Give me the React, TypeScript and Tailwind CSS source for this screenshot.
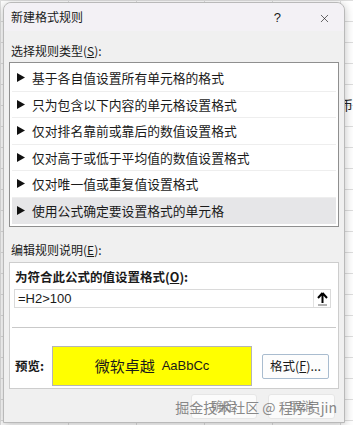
import { X } from 'lucide-react';

const rules = [
    '基于各自值设置所有单元格的格式',
    '只为包含以下内容的单元格设置格式',
    '仅对排名靠前或靠后的数值设置格式',
    '仅对高于或低于平均值的数值设置格式',
    '仅对唯一值或重复值设置格式',
    '使用公式确定要设置格式的单元格',
];

const cjk = "font-['Noto_Sans_CJK_SC','Noto_Sans',sans-serif]";

export default function App() {
    return (
        <div
            className={`relative w-[353px] h-[425px] overflow-hidden bg-white bg-[linear-gradient(#dedede_1px,transparent_1px),linear-gradient(90deg,#dedede_1px,transparent_1px)] bg-[size:68px_21px] text-[#1a1a1a] ${cjk}`}
        >
            {/* spreadsheet fragments peeking out on the right */}
            <div className="absolute right-0 top-[98px] text-[13px] leading-none text-[#222]">]币</div>

            {/* dialog */}
            <div className="absolute left-[3px] top-[2px] w-[342px] h-[421px] flex flex-col rounded-t-[8px] border border-[#b9b9b9] bg-[#f0f0f0] shadow-[0_2px_10px_rgba(0,0,0,0.25)]">
                {/* title bar */}
                <div className="flex items-center h-[28px] pl-[7px] rounded-t-[8px] bg-[#f3f1f5]">
                    <span className="text-[12px]">新建格式规则</span>
                    <span className="ml-auto mr-[37px] text-[13px] font-['Liberation_Sans',sans-serif] mt-[2px]">?</span>
                    <X className="mr-[13px] mt-[2px]" size={13} strokeWidth={1.2} />
                </div>

                <div className="flex flex-col px-[5px]">
                    <div className="mt-[12px] text-[12px] leading-[16px] pl-[2px]">选择规则类型(<span className="underline">S</span>):</div>

                    {/* rule list */}
                    <div className="mt-[3px] h-[165px] border border-[#8f8f8f] bg-white px-[2px] pt-[2px]">
                        {rules.map((r, i) => (
                            <div
                                key={r}
                                className={`flex items-center h-[26.5px] pl-[5px] border-b ${
                                    i === rules.length - 1 ? 'bg-[#e6e6e8] border-transparent' : 'border-[#eeeeee]'
                                }`}
                            >
                                <svg className="mr-[7px]" width="8" height="9" viewBox="0 0 8 9">
                                    <path d="M0 0 L8 4.5 L0 9 Z" fill="#111" />
                                </svg>
                                <span className="text-[12.8px]">{r}</span>
                            </div>
                        ))}
                    </div>

                    <div className="mt-[15px] text-[12px] leading-[16px] pl-[2px]">编辑规则说明(<span className="underline">E</span>):</div>

                    {/* rule description */}
                    <div className="mt-[4px] h-[127px] flex flex-col border border-[#cdcdcd] bg-white">
                        <div className="px-[5px] pt-[6px] text-[12.5px] font-bold leading-[16px]">
                            为符合此公式的值设置格式(<span className="underline">O</span>):
                        </div>
                        <div className="mx-[4px] mt-[4px] w-[317px] h-[19px] flex items-center border border-[#dadada]">
                            <span className="pl-[3px] text-[13px] font-['Liberation_Sans',sans-serif]">=H2&gt;100</span>
                            <div className="ml-auto w-[17px] h-[17px] flex items-center justify-center border-l border-[#e2e2e2]">
                                <svg width="11" height="14" viewBox="0 0 11 14">
                                    <path d="M5.5 1 L1 6 M5.5 1 L10 6 M5.5 1 V11" stroke="#000" strokeWidth="2" fill="none" />
                                    <path d="M1 13 H10" stroke="#666" strokeWidth="1" />
                                </svg>
                            </div>
                        </div>
                        <div className="mt-[19px] mx-[2px] border-t border-[#c9c9c9]" />
                        <div className="flex items-center mt-[18px] pl-[5px]">
                            <span className="w-[37px] text-[12.5px] font-bold">预览:</span>
                            <div className="w-[200px] h-[40px] flex items-center justify-center gap-[7px] border border-[#b5b5b5] bg-[#ffff00]">
                                <span className="text-[15px]">微软卓越</span>
                                <span className="text-[13px] font-['Liberation_Sans',sans-serif]">AaBbCc</span>
                            </div>
                            <button className="ml-[10px] w-[67px] h-[25px] border border-[#a9bccf] bg-[#fdfdfd] text-[12.5px] rounded-[2px]">
                                格式(<span className="underline">F</span>)...
                            </button>
                        </div>
                    </div>

                    {/* bottom buttons */}
                    <div className="relative flex justify-end gap-[11px] mt-[5px] pr-[4px]">
                        <button className="w-[66px] h-[25px] rounded-[3px] border border-[#e6e6e6] bg-[#fbfbfb] text-[12.5px] text-[#9a9a9a]">确定</button>
                        <button className="w-[67px] h-[25px] rounded-[3px] border border-[#e6e6e6] bg-[#fbfbfb] text-[12.5px] text-[#9a9a9a]">取消</button>
                        <span className="absolute right-[2px] top-[3px] text-[14px] text-[#6d6d6d] opacity-80 whitespace-nowrap">
                            掘金技术社区 @ 程序员jin
                        </span>
                    </div>
                </div>
            </div>
        </div>
    );
}
